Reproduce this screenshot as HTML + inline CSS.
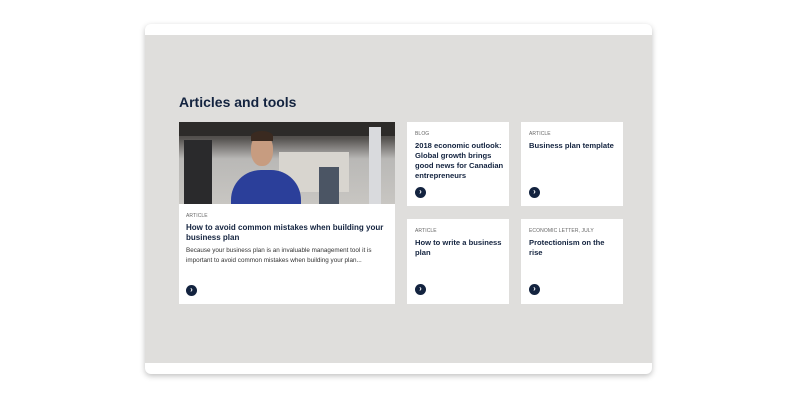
<!DOCTYPE html>
<html><head><style>
*{margin:0;padding:0;box-sizing:border-box}
body{width:800px;height:400px;background:#fff;position:relative;overflow:hidden;font-family:"Liberation Sans",sans-serif;color:#0f2340}
.frame{position:absolute;left:145px;top:24px;width:507px;height:350px;background:#fff;border-radius:6px;box-shadow:0 2px 6px rgba(0,0,0,.25)}
.grey{position:absolute;left:145px;top:35px;width:507px;height:328px;background:#dfdedc}
h1{position:absolute;left:179px;top:94px;font-size:14px;font-weight:bold;color:#13233f}
.card{position:absolute;background:#fff}
.lab{font-size:5px;color:#666;letter-spacing:.1px}
.t{font-size:7.6px;font-weight:bold;line-height:10px;margin-top:4px;color:#13233f;white-space:nowrap}
.arr{position:absolute;width:11px;height:11px;border-radius:50%;background:#13233f;color:#fff;font-size:8px;line-height:10px;text-align:center;font-weight:bold}
</style></head><body>
<div class="frame"></div>
<div class="grey"></div>
<h1>Articles and tools</h1>
<div class="card" style="left:179px;top:122px;width:216px;height:182px">
 <div style="position:absolute;left:0;top:0;width:216px;height:82px;overflow:hidden;background:linear-gradient(180deg,#3a3938 0,#55524f 20%,#b9b8b6 45%,#c8c6c2 100%)">
  <div style="position:absolute;left:0;top:0;width:216px;height:14px;background:#2d2b29"></div>
  <div style="position:absolute;left:5px;top:18px;width:28px;height:64px;background:#2a2a2c"></div>
  <div style="position:absolute;left:100px;top:30px;width:70px;height:40px;background:#d8d5cf"></div>
  <div style="position:absolute;left:190px;top:5px;width:12px;height:77px;background:#d9dadd"></div>
  <div style="position:absolute;left:140px;top:45px;width:20px;height:37px;background:#4b5564"></div>
  <div style="position:absolute;left:52px;top:48px;width:70px;height:40px;border-radius:30px 30px 0 0;background:#2b3f9a"></div>
  <div style="position:absolute;left:72px;top:12px;width:22px;height:32px;border-radius:45%;background:#c79c80"></div>
  <div style="position:absolute;left:72px;top:9px;width:22px;height:10px;border-radius:50% 50% 0 0;background:#3a2a20"></div>
 </div>
 <div style="position:absolute;left:7px;top:91px;width:205px">
  <div class="lab">ARTICLE</div>
  <div class="t" style="font-size:8px">How to avoid common mistakes when building your<br>business plan</div>
  <div style="font-size:6.3px;line-height:10px;color:#333;margin-top:3px;white-space:nowrap">Because your business plan is an invaluable management tool it is<br>important to avoid common mistakes when building your plan...</div>
 </div>
 <div class="arr" style="left:7px;top:163px">›</div>
</div>
<div class="card" style="left:407px;top:122px;width:102px;height:84px">
 <div style="padding:9px 0 0 8px"><div class="lab">BLOG</div><div class="t">2018 economic outlook:<br>Global growth brings<br>good news for Canadian<br>entrepreneurs</div></div>
 <div class="arr" style="left:8px;top:65px">›</div>
</div>
<div class="card" style="left:521px;top:122px;width:102px;height:84px">
 <div style="padding:9px 0 0 8px"><div class="lab">ARTICLE</div><div class="t">Business plan template</div></div>
 <div class="arr" style="left:8px;top:65px">›</div>
</div>
<div class="card" style="left:407px;top:219px;width:102px;height:85px">
 <div style="padding:9px 0 0 8px"><div class="lab">ARTICLE</div><div class="t">How to write a business<br>plan</div></div>
 <div class="arr" style="left:8px;top:65px">›</div>
</div>
<div class="card" style="left:521px;top:219px;width:102px;height:85px">
 <div style="padding:9px 0 0 8px"><div class="lab">ECONOMIC LETTER, JULY</div><div class="t">Protectionism on the<br>rise</div></div>
 <div class="arr" style="left:8px;top:65px">›</div>
</div>
</body></html>
